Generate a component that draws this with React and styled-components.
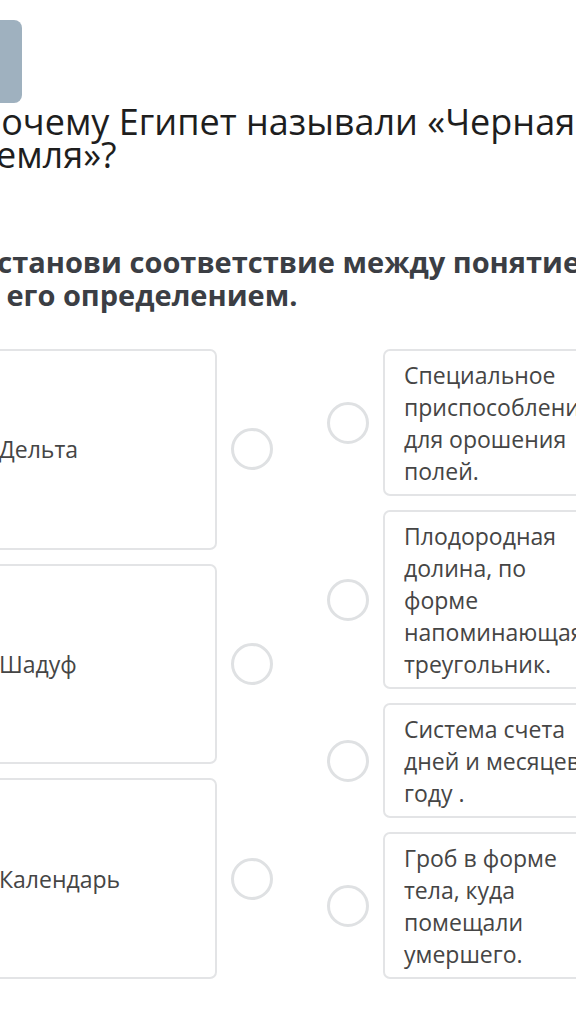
import styled, { createGlobalStyle } from "styled-components";

const GlobalStyle = createGlobalStyle`
  html, body {
    margin: 0;
    padding: 0;
    background: #fff;
  }
  body {
    font-family: "Open Sans", "Noto Sans", sans-serif;
  }
`;

const leftItems = ["Дельта", "Шадуф", "Календарь"];

const rightItems = [
  "Специальное приспособление для орошения полей.",
  "Плодородная долина, по форме напоминающая треугольник.",
  "Система счета дней и месяцев в году .",
  "Гроб в форме тела, куда помещали умершего.",
];

const App = () => {
  return (
    <Viewport>
      <GlobalStyle />
      <Page>
        <BackButton aria-label="back" />
        <Title>Почему Египет называли «Черная Земля»?</Title>
        <Task>Установи соответствие между понятием и его определением.</Task>
        <Match>
          <Column>
            {leftItems.map((text) => (
              <LeftRow key={text}>
                <TermCard>{text}</TermCard>
                <Radio />
              </LeftRow>
            ))}
          </Column>
          <Column>
            {rightItems.map((text) => (
              <RightRow key={text}>
                <Radio />
                <DefCard>{text}</DefCard>
              </RightRow>
            ))}
          </Column>
        </Match>
      </Page>
    </Viewport>
  );
};

const Viewport = styled.div`
  width: 576px;
  height: 1019px;
  overflow: hidden;
`;

const Page = styled.div`
  width: 700px;
  margin-left: -20px;
  padding-top: 20px;
`;

const BackButton = styled.div`
  width: 42px;
  height: 83px;
  border-radius: 0 8px 8px 0;
  background: #9fb1bf;
`;

const Title = styled.h1`
  margin: 0 0 0 -5px;
  padding-top: 2px;
  width: 640px;
  font-size: 36px;
  line-height: 33px;
  font-weight: 400;
  color: #1e1e1e;
`;

const Task = styled.h2`
  margin: 0 0 0 -2px;
  padding-top: 74px;
  width: 636px;
  font-size: 29px;
  line-height: 33px;
  font-weight: 700;
  color: #3b3e44;
`;

const Match = styled.div`
  display: flex;
  gap: 54px;
  margin-top: 38px;
  align-items: stretch;
`;

const Column = styled.div`
  display: flex;
  flex-direction: column;
  gap: 14px;
`;

const LeftRow = styled.div`
  flex: 1;
  display: flex;
  align-items: center;
  gap: 14px;
`;

const RightRow = styled.div`
  display: flex;
  align-items: center;
  gap: 14px;
`;

const Card = styled.div`
  box-sizing: border-box;
  border: 2px solid #e3e4e6;
  border-radius: 7px;
  background: #fff;
  font-size: 23px;
  line-height: 32px;
  color: #454545;
`;

const TermCard = styled(Card)`
  width: 237px;
  align-self: stretch;
  display: flex;
  align-items: center;
  padding: 0 17px;
`;

const DefCard = styled(Card)`
  width: 240px;
  padding: 7.5px 19px;
`;

const Radio = styled.div`
  box-sizing: border-box;
  flex: none;
  width: 42px;
  height: 42px;
  border-radius: 50%;
  border: 3px solid #dfe1e3;
`;

export default App;
